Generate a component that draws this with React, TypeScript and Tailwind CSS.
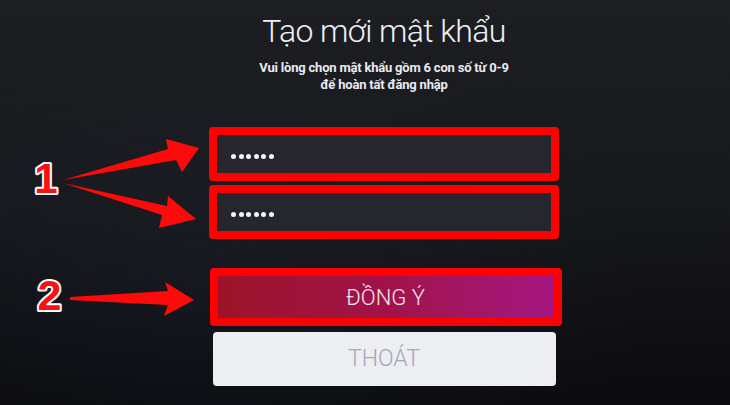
import React from "react";

function Dots() {
  return (
    <div className="flex gap-[2.6px]">
      {[0, 1, 2, 3, 4, 5].map((i) => (
        <div key={i} className="w-[5px] h-[5px] rounded-full bg-[#f4f5fa]" />
      ))}
    </div>
  );
}

function Field({ pad }: { pad: string }) {
  return (
    <div className="border-8 border-[#ff0000] rounded-[4px] w-[350px]">
      <div className={`h-[38px] bg-[#25262e] flex items-center pl-[14px] ${pad}`}>
        <Dots />
      </div>
    </div>
  );
}

export default function App() {
  return (
    <div
      className="relative w-[730px] h-[405px] overflow-hidden bg-linear-to-b from-[#1d1e21] via-[#17181b] to-[#0b0b0d]"
      style={{ fontFamily: "Roboto, 'Noto Sans', sans-serif" }}
    >
      <div className="absolute inset-0 bg-[radial-gradient(ellipse_at_30%_70%,rgba(40,50,80,0.18),transparent_60%)]" />
      <div className="relative flex flex-col items-center pl-[38px] pt-[11px]">
        <h1 className="text-[32px] leading-[40px] font-light tracking-[-0.6px] text-[#eef0f8]">Tạo mới mật khẩu</h1>
        <p className="mt-[8px] text-[13px] leading-[17px] font-bold text-[#e8eaf4] text-center tracking-[-0.2px]">
          Vui lòng chọn mật khẩu gồm 6 con số từ 0-9
          <br />
          để hoàn tất đăng nhập
        </p>
        <div className="mt-[34px] flex flex-col gap-[4px]">
          <Field pad="pt-[5px]" />
          <Field pad="pt-[4px]" />
        </div>
        <div className="mt-[29px] border-8 border-[#ff0000] rounded-[4px] w-[352px] ml-[3px]">
          <div className="h-[42px] bg-linear-to-r from-[#9c1428] via-[#a1124a] to-[#a3147f] flex items-center justify-center text-[22px] font-light text-[#f5e8f0]">
            ĐỒNG Ý
          </div>
        </div>
        <div className="mt-[6px] w-[343px] h-[54px] rounded-[4px] bg-[#eceef2] flex items-center justify-center text-[23px] font-light text-[#a3a7b9]">
          THOÁT
        </div>
      </div>
      <svg className="absolute inset-0 pointer-events-none" width="730" height="405" viewBox="0 0 730 405">
        <polygon fill="#ff0a0a" points="63,180 168,149 166,139 199,148 182,172 176,160" />
        <polygon fill="#ff0a0a" points="63,183 167,206 168,196 196,219 159,228 162,215" />
        <polygon fill="#ff0a0a" points="70,297 168,291 165,282 194,300 164,316 168,305 70,300" />
        <text
          x="46"
          y="193"
          textAnchor="middle"
          fontFamily="'Liberation Sans', Arial, sans-serif"
          fontWeight="bold"
          fontSize="42"
          fill="#ff1010"
          stroke="#ffffff"
          strokeWidth="4"
          strokeLinejoin="round"
          style={{ paintOrder: "stroke" }}
        >
          1
        </text>
        <text
          x="49.5"
          y="310"
          textAnchor="middle"
          fontFamily="'Liberation Sans', Arial, sans-serif"
          fontWeight="bold"
          fontSize="43"
          fill="#ff1010"
          stroke="#ffffff"
          strokeWidth="4"
          strokeLinejoin="round"
          style={{ paintOrder: "stroke" }}
        >
          2
        </text>
      </svg>
    </div>
  );
}
